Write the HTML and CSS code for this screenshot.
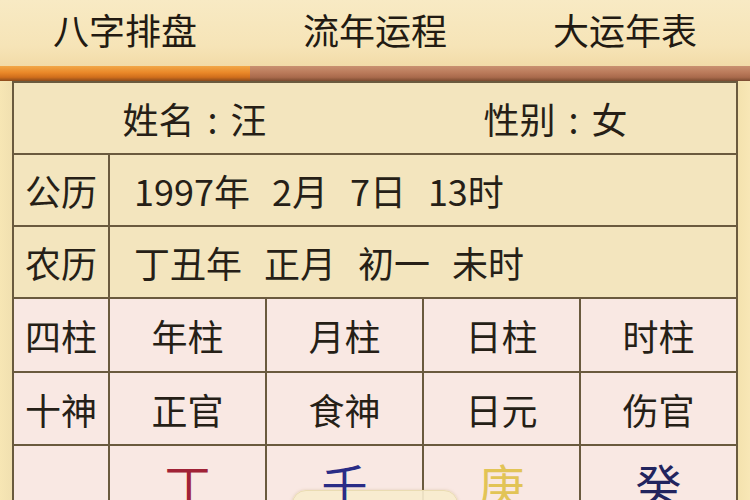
FILE: index.html
```html
<!DOCTYPE html>
<html lang="zh-CN">
<head>
<meta charset="utf-8">
<title>八字排盘</title>
<link rel="stylesheet" href="styles.css">
</head>
<body>
<div class="page">
  <nav class="tabs">
    <div class="tab">八字排盘</div>
    <div class="tab">流年运程</div>
    <div class="tab">大运年表</div>
  </nav>
  <div class="indicator">
    <div class="ind-active"></div>
    <div class="ind-rest"></div>
  </div>
  <div class="content">
    <div class="side side-left"></div>
    <div class="table">
      <div class="row-name">
        <div class="half">姓名<span class="colon">:</span>汪</div>
        <div class="half">性别<span class="colon">:</span>女</div>
      </div>
      <div class="cell label cream">公历</div>
      <div class="cell value cream">
        <span class="part">1997年</span><span class="part">2月</span><span class="part">7日</span><span class="part">13时</span>
      </div>
      <div class="cell label cream">农历</div>
      <div class="cell value cream">
        <span class="part">丁丑年</span><span class="part">正月</span><span class="part">初一</span><span class="part">未时</span>
      </div>
      <div class="cell label pink">四柱</div>
      <div class="cell pink">年柱</div>
      <div class="cell pink">月柱</div>
      <div class="cell pink">日柱</div>
      <div class="cell pink">时柱</div>
      <div class="cell label pink">十神</div>
      <div class="cell pink">正官</div>
      <div class="cell pink">食神</div>
      <div class="cell pink">日元</div>
      <div class="cell pink">伤官</div>
      <div class="cell label pink"></div>
      <div class="cell pink big"><span class="gan fire">丁</span></div>
      <div class="cell pink big"><span class="gan water">壬</span></div>
      <div class="cell pink big"><span class="gan metal">庚</span></div>
      <div class="cell pink big"><span class="gan water2">癸</span></div>
    </div>
    <div class="side side-right"></div>
    <div class="popup"></div>
  </div>
</div>
</body>
</html>
```
FILE: styles.css
```css
* { box-sizing: border-box; }
html, body { margin: 0; padding: 0; }
body {
  width: 750px;
  height: 500px;
  overflow: hidden;
  font-family: "Noto Sans CJK SC", "Noto Sans", sans-serif;
  color: #261f17;
  background: #f3e3b8;
}
.page { width: 750px; height: 500px; display: flex; flex-direction: column; }
.tabs {
  display: flex;
  height: 66px;
  background: linear-gradient(180deg, #f8eac4 0%, #f6e4b7 70%, #f2dba8 100%);
}
.tab {
  flex: 1;
  display: flex;
  align-items: center;
  justify-content: center;
  font-size: 36px;
  padding-bottom: 8px;
  color: #221a12;
}
.indicator { display: flex; height: 15px; }
.ind-active {
  width: 250px;
  background: linear-gradient(180deg, #f2a748 0%, #e98728 45%, #d06e1c 75%, #8a4a1c 100%);
}
.ind-rest {
  flex: 1;
  background: linear-gradient(180deg, #c99070 0%, #ba7a5a 45%, #a96a4c 75%, #7a4a30 100%);
}
.content {
  flex: 1;
  display: flex;
  position: relative;
  overflow: hidden;
}
.side { width: 12px; }
.side-left { background: linear-gradient(90deg, #f7e6b4, #f1e0b0); }
.side-right { background: linear-gradient(90deg, #f4e2ae, #f8e7b6); }
.table {
  width: 726px;
  display: grid;
  grid-template-columns: 94px repeat(4, 1fr);
  grid-template-rows: 70px 70px 70px 72px 71px 80px;
  gap: 2px;
  padding: 2px;
  background: #6a5a3e;
  align-content: start;
}
.row-name {
  grid-column: 1 / -1;
  display: flex;
  background: #f3e5be;
}
.half {
  flex: 1;
  display: flex;
  align-items: center;
  justify-content: center;
  font-size: 36px;
}
.colon {
  display: inline-block;
  width: 36px;
  text-align: center;
}
.cell {
  display: flex;
  align-items: center;
  justify-content: center;
  font-size: 36px;
}
.cream { background: #f3e5be; }
.pink { background: #f9e8e3; }
.value {
  grid-column: 2 / -1;
  justify-content: flex-start;
  padding-left: 24px;
}
.part { margin-right: 22px; }
.big { align-items: flex-start; padding-top: 14px; }
.gan { font-size: 46px; line-height: 1; position: relative; z-index: 2; }
.fire { color: #a02236; }
.water { color: #2a2c86; }
.metal { color: #e2c456; }
.water2 { color: #22245e; }
.popup {
  position: absolute;
  left: 292px;
  top: 409px;
  width: 166px;
  height: 40px;
  border-radius: 14px;
  background: rgba(247, 236, 206, 0.92);
  border: 1px solid #eadcb2;
  box-shadow: 0 0 3px rgba(180, 150, 90, 0.35);
  z-index: 1;
}
```
